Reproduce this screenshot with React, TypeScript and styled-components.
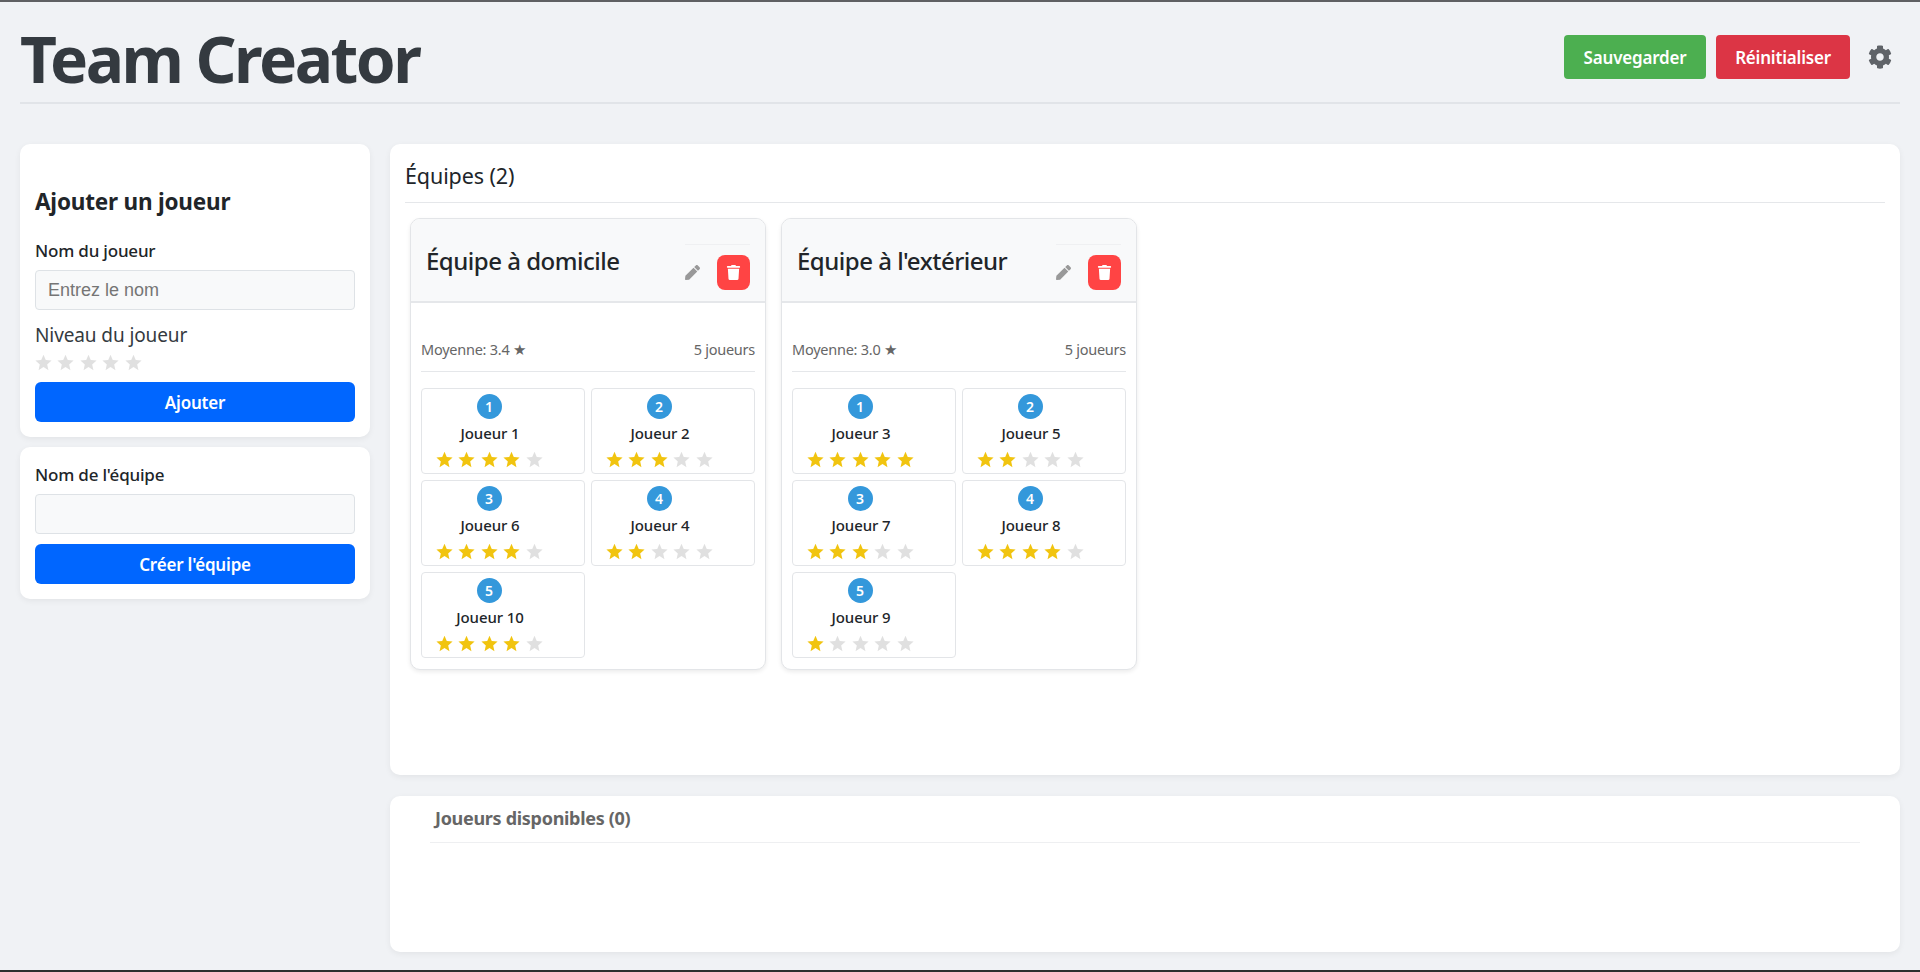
import { FaCog, FaPen, FaTrash } from 'react-icons/fa';
import styled, { createGlobalStyle } from 'styled-components';

const GlobalStyle = createGlobalStyle`
  html, body {
    margin: 0;
    padding: 0;
    background: #f0f2f5;
  }

  * {
    box-sizing: border-box;
  }
`;

const Page = styled.div`
  background: #f0f2f5;
  border-bottom: 2px solid #2e2e2e;
  border-top: 2px solid #5f6063;
  color: #212529;
  display: flex;
  flex-direction: column;
  font-family: "Noto Sans", "Open Sans", sans-serif;
  height: 972px;
  overflow: hidden;
  padding: 0 20px;
`;

const Header = styled.header`
  align-items: center;
  border-bottom: 2px solid #e1e4e8;
  display: flex;
  flex: none;
  height: 102px;
  justify-content: space-between;
  margin-bottom: 40px;
  padding-top: 10px;
`;

const Title = styled.h1`
  color: #343a40;
  font-size: 64px;
  font-weight: 700;
  letter-spacing: -2.5px;
  line-height: 1;
  margin: 4px 0 0;
`;

const HeaderActions = styled.div`
  align-items: center;
  display: flex;
  gap: 10px;
  padding-right: 8px;
`;

const HeaderButton = styled.button<{ $bg: string; $width: number }>`
  background: ${(p) => p.$bg};
  border: none;
  border-radius: 4px;
  color: #fff;
  font-family: inherit;
  font-size: 17px;
  font-weight: 600;
  height: 44px;
  letter-spacing: -0.2px;
  padding: 0;
  width: ${(p) => p.$width}px;
`;

const GearButton = styled.span`
  color: #5f6368;
  display: flex;
  font-size: 24px;
  margin-left: 8px;
`;

const Columns = styled.div`
  display: grid;
  flex: 1;
  gap: 20px;
  grid-template-columns: 350px 1fr;
  min-height: 0;
  padding-bottom: 18px;
`;

const Sidebar = styled.aside`
  display: flex;
  flex-direction: column;
  gap: 10px;
`;

const Panel = styled.section`
  background: #fff;
  border-radius: 10px;
  box-shadow: 0 2px 6px rgba(0, 0, 0, 0.06);
`;

const PlayerForm = styled(Panel)`
  height: 293px;
  padding: 44px 15px 0;
`;

const TeamForm = styled(Panel)`
  height: 152px;
  padding: 17px 15px 0;
`;

const FormHeading = styled.h2`
  color: #212529;
  font-size: 22.5px;
  font-weight: 700;
  letter-spacing: -0.2px;
  line-height: 28px;
  margin: 0 0 24px;
`;

const FieldLabel = styled.label`
  color: #212529;
  display: block;
  font-size: 17px;
  font-weight: 500;
  letter-spacing: -0.2px;
  line-height: 22px;
  margin-bottom: 8px;
`;

const TextField = styled.input`
  background: #f8f9fa;
  border: 1px solid #dee2e6;
  border-radius: 4px;
  color: #212529;
  display: block;
  font-family: "Liberation Sans", Arial, sans-serif;
  font-size: 18px;
  height: 40px;
  margin-bottom: 10px;
  outline: none;
  padding: 0 12px;
  width: 100%;

  &::placeholder {
    color: #757575;
    opacity: 1;
  }
`;

const LevelLabel = styled.div`
  color: #343a40;
  font-size: 19px;
  letter-spacing: -0.1px;
  line-height: 26px;
  margin-top: 12px;
`;

const LevelStars = styled.div`
  display: flex;
  gap: 5.4px;
  height: 26px;
  padding-top: 6px;
`;

const WideButton = styled.button`
  background: #0066ff;
  border: none;
  border-radius: 6px;
  color: #fff;
  display: block;
  font-family: inherit;
  font-size: 17px;
  font-weight: 600;
  height: 40px;
  letter-spacing: -0.2px;
  margin-top: 8px;
  padding: 0;
  width: 100%;
`;

const TeamFormButton = styled(WideButton)`
  margin-top: 0;
`;

const Main = styled.main`
  display: flex;
  flex-direction: column;
  gap: 21px;
`;

const TeamsPanel = styled(Panel)`
  height: 631px;
  padding: 14px 15px 0;
`;

const TeamsTitle = styled.h2`
  border-bottom: 1px solid #e5e7ea;
  color: #212529;
  font-size: 21.5px;
  font-weight: 400;
  height: 45px;
  letter-spacing: -0.1px;
  line-height: 36px;
  margin: 0 0 15px;
`;

const TeamsRow = styled.div`
  display: flex;
  gap: 15px;
  padding-left: 5px;
`;

const TeamCard = styled.article`
  background: #fff;
  border: 1px solid #e3e5e8;
  border-radius: 10px;
  box-shadow: 0 2px 4px rgba(0, 0, 0, 0.08);
  height: 452px;
  overflow: hidden;
  width: 356px;
`;

const TeamHeader = styled.header`
  align-items: flex-start;
  background: #f8f9fa;
  border-bottom: 2px solid #e5e7ea;
  display: flex;
  height: 84px;
  justify-content: space-between;
  padding: 24px 15px 0;
`;

const TeamName = styled.h3`
  color: #212529;
  font-size: 24px;
  font-weight: 500;
  letter-spacing: -0.5px;
  line-height: 36px;
  margin: 0;
`;

const TeamActions = styled.div`
  align-items: center;
  border-top: 1px solid #eff0f2;
  display: flex;
  gap: 17px;
  padding-top: 10px;
  position: relative;
  top: 1px;
`;

const EditIcon = styled.span`
  color: #999;
  display: flex;
  font-size: 15px;
`;

const DeleteButton = styled.button`
  align-items: center;
  background: #ff4444;
  border: none;
  border-radius: 8px;
  color: #fff;
  display: flex;
  font-size: 15px;
  height: 35px;
  justify-content: center;
  padding: 0;
  width: 33px;
`;

const TeamBody = styled.div`
  padding: 31px 10px 0;
`;

const TeamStats = styled.div`
  border-bottom: 1px solid #e5e7ea;
  color: #666;
  display: flex;
  font-size: 14.5px;
  height: 38px;
  justify-content: space-between;
  letter-spacing: -0.25px;
  line-height: 31px;
  margin-bottom: 16px;
`;

const PlayerGrid = styled.div`
  display: grid;
  gap: 6px;
  grid-template-columns: repeat(2, 1fr);
`;

const PlayerCard = styled.div`
  align-items: flex-start;
  border: 1px solid #e3e5e8;
  border-radius: 4px;
  display: flex;
  height: 86px;
  padding: 5px 0 0 14px;
`;

const PlayerInner = styled.div`
  align-items: center;
  display: flex;
  flex-direction: column;
  width: 108px;
`;

const Badge = styled.span`
  align-items: center;
  background: #3498db;
  border-radius: 50%;
  color: #fff;
  display: flex;
  font-size: 14px;
  font-weight: 600;
  height: 25px;
  justify-content: center;
  margin-right: 2px;
  width: 25px;
`;

const PlayerName = styled.div`
  color: #212529;
  font-size: 15px;
  font-weight: 500;
  letter-spacing: -0.1px;
  line-height: 20px;
  margin-top: 4px;
  white-space: nowrap;
`;

const StarRow = styled.div`
  display: flex;
  gap: 5.4px;
  margin-top: 8px;
  width: 108px;
`;

const StarIcon = styled.svg<{ $on: boolean }>`
  display: block;
  fill: ${(p) => (p.$on ? '#f1c40f' : '#e0e0e0')};
  flex: none;
  height: 17px;
  width: 17px;
`;

const PoolPanel = styled(Panel)`
  flex: 1;
  padding: 9px 40px 0;
`;

const PoolTitle = styled.h3`
  border-bottom: 1px solid #eeeff1;
  color: #666;
  font-size: 18px;
  font-weight: 700;
  height: 38px;
  letter-spacing: -0.3px;
  line-height: 27px;
  margin: 0;
  padding-left: 5px;
`;

const Star = ({ on }: { on: boolean }) => (
  <StarIcon $on={on} viewBox="0 0 24 24">
    <polygon points="12,1 15.2,8.6 23.4,9.3 17.2,14.7 19,22.8 12,18.5 5,22.8 6.8,14.7 0.6,9.3 8.8,8.6" />
  </StarIcon>
);

const Stars = ({ value }: { value: number }) => (
  <StarRow>
    {[1, 2, 3, 4, 5].map((n) => (
      <Star key={n} on={n <= value} />
    ))}
  </StarRow>
);

type Team = {
  name: string;
  average: string;
  players: { name: string; level: number }[];
};

const teams: Team[] = [
  {
    name: 'Équipe à domicile',
    average: '3.4',
    players: [
      { name: 'Joueur 1', level: 4 },
      { name: 'Joueur 2', level: 3 },
      { name: 'Joueur 6', level: 4 },
      { name: 'Joueur 4', level: 2 },
      { name: 'Joueur 10', level: 4 },
    ],
  },
  {
    name: "Équipe à l'extérieur",
    average: '3.0',
    players: [
      { name: 'Joueur 3', level: 5 },
      { name: 'Joueur 5', level: 2 },
      { name: 'Joueur 7', level: 3 },
      { name: 'Joueur 8', level: 4 },
      { name: 'Joueur 9', level: 1 },
    ],
  },
];

export default function App() {
  return (
    <>
      <GlobalStyle />
      <Page>
        <Header>
          <Title>Team Creator</Title>
          <HeaderActions>
            <HeaderButton $bg="#4caf50" $width={142}>Sauvegarder</HeaderButton>
            <HeaderButton $bg="#dc3545" $width={134}>Réinitialiser</HeaderButton>
            <GearButton><FaCog /></GearButton>
          </HeaderActions>
        </Header>
        <Columns>
          <Sidebar>
            <PlayerForm>
              <FormHeading>Ajouter un joueur</FormHeading>
              <FieldLabel>Nom du joueur</FieldLabel>
              <TextField placeholder="Entrez le nom" />
              <LevelLabel>Niveau du joueur</LevelLabel>
              <LevelStars>
                {[1, 2, 3, 4, 5].map((n) => (
                  <Star key={n} on={false} />
                ))}
              </LevelStars>
              <WideButton>Ajouter</WideButton>
            </PlayerForm>
            <TeamForm>
              <FieldLabel>Nom de l'équipe</FieldLabel>
              <TextField />
              <TeamFormButton>Créer l'équipe</TeamFormButton>
            </TeamForm>
          </Sidebar>
          <Main>
            <TeamsPanel>
              <TeamsTitle>Équipes (2)</TeamsTitle>
              <TeamsRow>
                {teams.map((team) => (
                  <TeamCard key={team.name}>
                    <TeamHeader>
                      <TeamName>{team.name}</TeamName>
                      <TeamActions>
                        <EditIcon><FaPen /></EditIcon>
                        <DeleteButton><FaTrash /></DeleteButton>
                      </TeamActions>
                    </TeamHeader>
                    <TeamBody>
                      <TeamStats>
                        <span>Moyenne: {team.average} ★</span>
                        <span>{team.players.length} joueurs</span>
                      </TeamStats>
                      <PlayerGrid>
                        {team.players.map((player, i) => (
                          <PlayerCard key={player.name}>
                            <PlayerInner>
                              <Badge>{i + 1}</Badge>
                              <PlayerName>{player.name}</PlayerName>
                              <Stars value={player.level} />
                            </PlayerInner>
                          </PlayerCard>
                        ))}
                      </PlayerGrid>
                    </TeamBody>
                  </TeamCard>
                ))}
              </TeamsRow>
            </TeamsPanel>
            <PoolPanel>
              <PoolTitle>Joueurs disponibles (0)</PoolTitle>
            </PoolPanel>
          </Main>
        </Columns>
      </Page>
    </>
  );
}
